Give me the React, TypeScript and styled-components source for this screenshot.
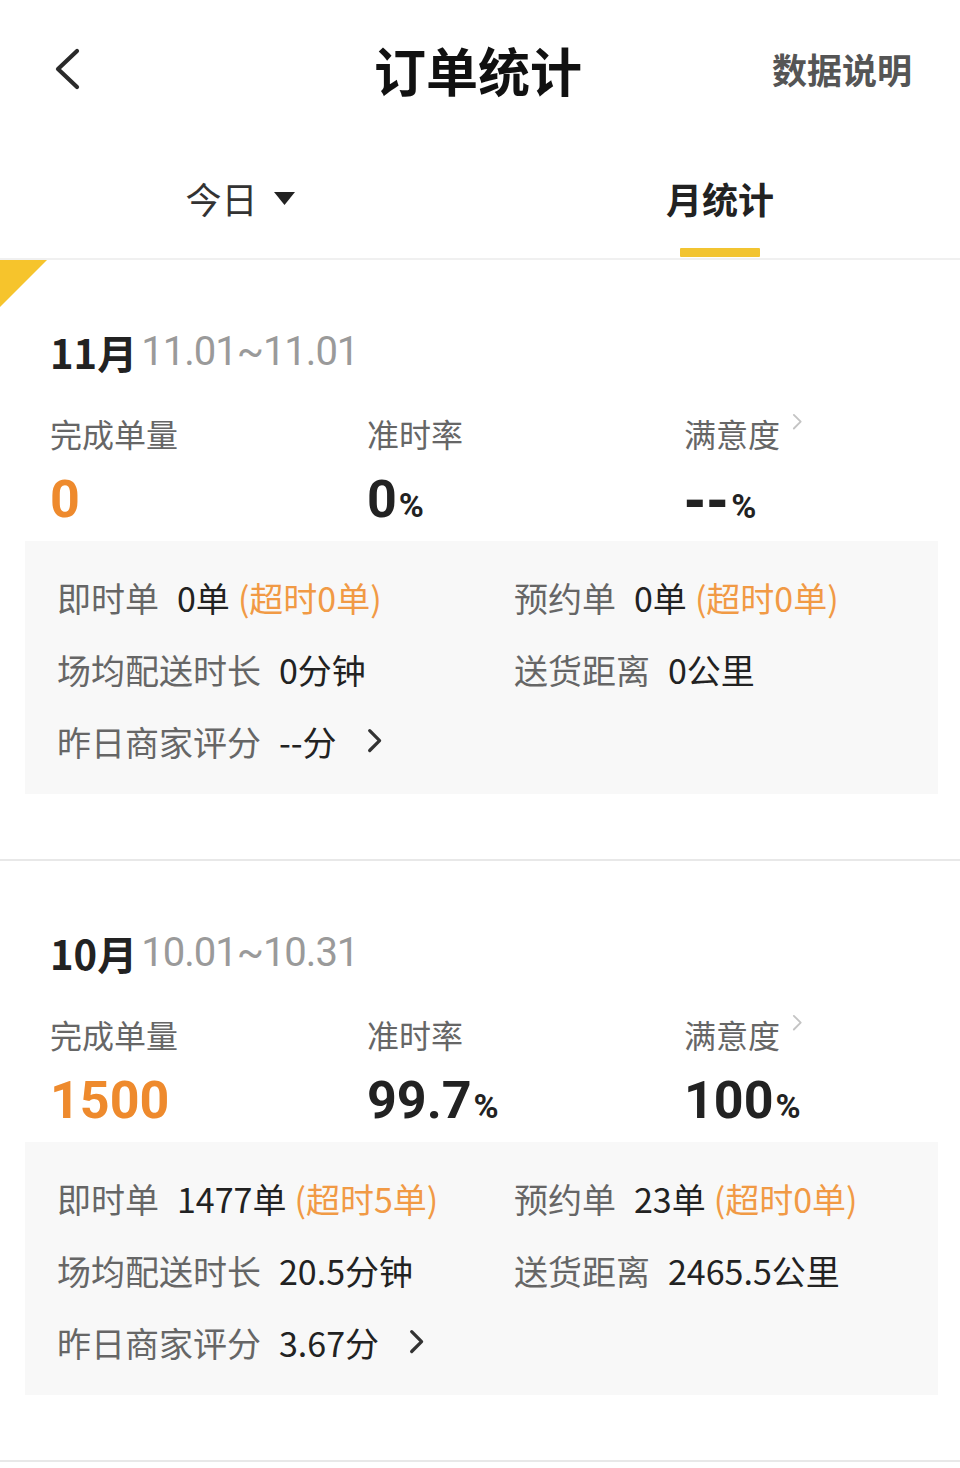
import styled, { createGlobalStyle } from "styled-components";

const GlobalStyle = createGlobalStyle`
  html, body {
    margin: 0;
    padding: 0;
    background: #ffffff;
  }
  body {
    font-family: "Noto Sans CJK SC", "Noto Sans", sans-serif;
    color: #222;
  }
`;

interface Row {
  label: string;
  value: string;
  overtime?: string;
  link?: boolean;
}

interface MonthData {
  month: string;
  range: string;
  count: string;
  onTime: string;
  satisfaction: string;
  rows: Row[];
}

const months: MonthData[] = [
  {
    month: "11月",
    range: "11.01~11.01",
    count: "0",
    onTime: "0",
    satisfaction: "--",
    rows: [
      { label: "即时单", value: "0单", overtime: "(超时0单)" },
      { label: "预约单", value: "0单", overtime: "(超时0单)" },
      { label: "场均配送时长", value: "0分钟" },
      { label: "送货距离", value: "0公里" },
      { label: "昨日商家评分", value: "--分", link: true },
    ],
  },
  {
    month: "10月",
    range: "10.01~10.31",
    count: "1500",
    onTime: "99.7",
    satisfaction: "100",
    rows: [
      { label: "即时单", value: "1477单", overtime: "(超时5单)" },
      { label: "预约单", value: "23单", overtime: "(超时0单)" },
      { label: "场均配送时长", value: "20.5分钟" },
      { label: "送货距离", value: "2465.5公里" },
      { label: "昨日商家评分", value: "3.67分", link: true },
    ],
  },
];

const Page = styled.div`
  width: 960px;
  min-height: 1468px;
  background: #fff;
`;

const Header = styled.header`
  height: 140px;
  display: grid;
  grid-template-columns: 1fr auto 1fr;
  align-items: center;
  padding: 0 48px 0 52px;
  box-sizing: border-box;
`;

const BackButton = styled.button`
  justify-self: start;
  border: none;
  background: none;
  padding: 0;
  display: flex;
  margin-top: -2px;
`;

const Title = styled.h1`
  margin: 0 0 0 -8px;
  font-size: 52px;
  font-weight: 700;
  color: #111;
  line-height: 1;
`;

const HeaderLink = styled.span`
  justify-self: end;
  font-size: 35px;
  font-weight: 700;
  color: #555;
  line-height: 1;
  margin-top: -4px;
`;

const Tabs = styled.nav`
  height: 120px;
  display: flex;
  border-bottom: 2px solid #f0f0f0;
  box-sizing: border-box;
`;

const Tab = styled.div<{ $active?: boolean }>`
  flex: 1;
  position: relative;
  display: flex;
  align-items: center;
  justify-content: center;
  padding-bottom: 2px;
  font-size: 36px;
  font-weight: ${(p) => (p.$active ? 700 : 400)};
  color: ${(p) => (p.$active ? "#222" : "#333")};
  gap: 16px;

  &::after {
    content: "";
    display: ${(p) => (p.$active ? "block" : "none")};
    position: absolute;
    bottom: 1px;
    left: 50%;
    width: 80px;
    height: 9px;
    margin-left: -40px;
    background: #f2c431;
    border-radius: 1px;
  }
`;

const Section = styled.section<{ $flag?: boolean }>`
  position: relative;
  padding: 64px 22px 65px 25px;
  border-bottom: 2px solid #e8e8e8;

  &::before {
    content: "";
    display: ${(p) => (p.$flag ? "block" : "none")};
    position: absolute;
    top: 0;
    left: 0;
    width: 0;
    height: 0;
    border-top: 47px solid #f6c42c;
    border-right: 47px solid transparent;
  }
`;

const MonthLine = styled.div`
  padding-left: 25px;
  height: 56px;
  display: flex;
  align-items: center;
  font-size: 40px;
  line-height: 1;
`;

const MonthName = styled.span`
  font-weight: 700;
  color: #222;
`;

const MonthRange = styled.span`
  font-family: "Roboto", "Noto Sans", sans-serif;
  color: #9a9a9a;
  font-weight: 400;
  letter-spacing: -1px;
  margin-left: 4px;
`;

const StatsGrid = styled.div`
  padding-left: 25px;
  margin-top: 31px;
  display: grid;
  grid-template-columns: 317px 317px 1fr;
`;

const Stat = styled.div`
  display: flex;
  flex-direction: column;
`;

const StatLabel = styled.div`
  height: 44px;
  display: flex;
  align-items: center;
  gap: 12px;
  font-size: 32px;
  color: #666;
`;

const StatValue = styled.div<{ $accent?: boolean }>`
  margin-top: 13px;
  height: 64px;
  display: flex;
  align-items: baseline;
  font-family: "Roboto", "Noto Sans", sans-serif;
  font-size: 52px;
  font-weight: 700;
  line-height: 64px;
  color: ${(p) => (p.$accent ? "#ee8a2d" : "#222")};
`;

const Dashes = styled.span`
  font-family: "DejaVu Sans", sans-serif;
  font-weight: 700;
  letter-spacing: 1px;
`;

const Percent = styled.span`
  font-size: 34px;
  font-weight: 700;
  margin-left: 2px;
`;

const DetailBox = styled.div`
  margin-top: 9px;
  background: #f8f8f8;
  padding: 20px 32px 17px 32px;
  display: grid;
  grid-template-columns: 457px 1fr;
`;

const DetailRow = styled.div`
  height: 72px;
  display: flex;
  align-items: center;
  font-size: 34px;
  white-space: nowrap;
`;

const DetailLabel = styled.span`
  color: #666;
`;

const DetailValue = styled.span`
  color: #222;
  margin-left: 18px;
`;

const Overtime = styled.span`
  color: #f19a45;
  margin-left: 8px;
`;

const RowArrow = styled.span`
  display: flex;
  margin-left: 30px;
`;

const SmallArrow = styled.span`
  display: flex;
  align-self: flex-start;
  margin-top: 2px;
`;

const ChevronLeft = () => (
  <svg width="30" height="42" viewBox="0 0 30 42">
    <path d="M25 3 L6 21 L25 39" fill="none" stroke="#2a2a2a" strokeWidth="4.2" strokeLinecap="round" strokeLinejoin="round" />
  </svg>
);

const ChevronRight = ({ size = 1, color = "#333", stroke = 4 }: { size?: number; color?: string; stroke?: number }) => (
  <svg width={18 * size} height={28 * size} viewBox="0 0 18 28">
    <path d="M3 3 L14 14 L3 25" fill="none" stroke={color} strokeWidth={stroke} strokeLinecap="round" strokeLinejoin="round" />
  </svg>
);

const Caret = () => (
  <svg width="21" height="13" viewBox="0 0 21 13">
    <path d="M0 0 H21 L10.5 13 Z" fill="#222" />
  </svg>
);

const ValueText = ({ text }: { text: string }) =>
  text === "--" ? <Dashes>{text}</Dashes> : <>{text}</>;

const MonthSection = ({ data, flag }: { data: MonthData; flag?: boolean }) => (
  <Section $flag={flag}>
    <MonthLine>
      <MonthName>{data.month}</MonthName>
      <MonthRange>{data.range}</MonthRange>
    </MonthLine>
    <StatsGrid>
      <Stat>
        <StatLabel>完成单量</StatLabel>
        <StatValue $accent>{data.count}</StatValue>
      </Stat>
      <Stat>
        <StatLabel>准时率</StatLabel>
        <StatValue>
          <ValueText text={data.onTime} />
          <Percent>%</Percent>
        </StatValue>
      </Stat>
      <Stat>
        <StatLabel>
          满意度
          <SmallArrow>
            <ChevronRight size={0.62} color="#c4c4c4" stroke={3} />
          </SmallArrow>
        </StatLabel>
        <StatValue>
          <ValueText text={data.satisfaction} />
          <Percent>%</Percent>
        </StatValue>
      </Stat>
    </StatsGrid>
    <DetailBox>
      {data.rows.map((row) => (
        <DetailRow key={row.label}>
          <DetailLabel>{row.label}</DetailLabel>
          <DetailValue>{row.value}</DetailValue>
          {row.overtime && <Overtime>{row.overtime}</Overtime>}
          {row.link && (
            <RowArrow>
              <ChevronRight size={0.9} color="#333" stroke={3.6} />
            </RowArrow>
          )}
        </DetailRow>
      ))}
    </DetailBox>
  </Section>
);

export default function App() {
  return (
    <Page>
      <GlobalStyle />
      <Header>
        <BackButton aria-label="返回">
          <ChevronLeft />
        </BackButton>
        <Title>订单统计</Title>
        <HeaderLink>数据说明</HeaderLink>
      </Header>
      <Tabs>
        <Tab>
          今日
          <Caret />
        </Tab>
        <Tab $active>月统计</Tab>
      </Tabs>
      {months.map((m, i) => (
        <MonthSection key={m.month} data={m} flag={i === 0} />
      ))}
    </Page>
  );
}
